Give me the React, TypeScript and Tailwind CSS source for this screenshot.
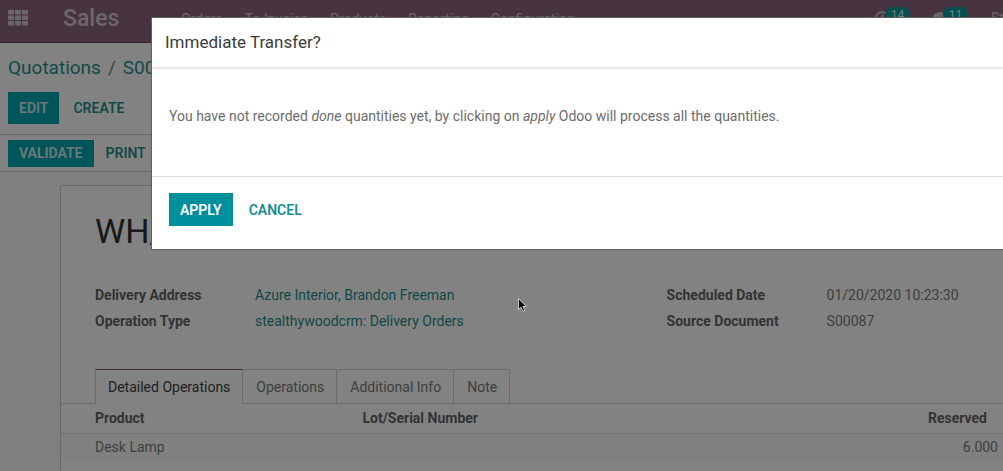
import type { ReactNode } from "react";

const menus = ["Orders", "To Invoice", "Products", "Reporting", "Configuration"];
const tabs = ["Detailed Operations", "Operations", "Additional Info", "Note"];

function AppsIcon() {
  return (
    <svg viewBox="0 0 20 16" className="h-4 w-5" fill="currentColor" aria-hidden="true">
      {[0, 5.5, 11].map((y) =>
        [0, 7, 14].map((x) => <rect key={`${x}-${y}`} x={x} y={y} width="6" height="4.5" rx="0.7" />),
      )}
    </svg>
  );
}

function ClockIcon() {
  return (
    <svg viewBox="0 0 14 14" className="size-3.5" fill="none" stroke="currentColor" strokeWidth="1.8" aria-hidden="true">
      <circle cx="7" cy="7" r="6" />
      <path d="M7.5 3.5V8H4.5" />
    </svg>
  );
}

function ChatIcon() {
  return (
    <svg viewBox="0 0 14 14" className="size-3.5" fill="currentColor" aria-hidden="true">
      <ellipse cx="7" cy="6.5" rx="7" ry="5.5" />
      <path d="M3 10 2 14l5-3z" />
    </svg>
  );
}

function SystrayButton({ icon, count, label }: { icon: ReactNode; count: number; label: string }) {
  return (
    <button type="button" aria-label={label} className="relative flex text-[#d5c8d0]">
      {icon}
      <span className="absolute -top-1 left-2.5 flex h-4 w-[25px] items-center justify-center rounded-full bg-[#00a0a0] text-[12px] leading-none text-[#e8f2f2]">
        {count}
      </span>
    </button>
  );
}

function Field({ label, children }: { label: string; children: ReactNode }) {
  return (
    <>
      <dt className="font-bold text-[#656565]">{label}</dt>
      <dd>{children}</dd>
    </>
  );
}

export default function App() {
  return (
    <div className="relative h-screen overflow-hidden bg-white font-[Roboto,sans-serif] text-[14px] leading-5 text-[#7c7c7c]">
      <header className="flex h-[43px] items-center border-b border-[#5f4556] bg-[#8d667f] pl-2 text-[#d5c8d0]">
        <button type="button" aria-label="Applications" className="-mt-1.5">
          <AppsIcon />
        </button>
        <a href="#sales" className="-mt-1 ml-[35px] w-[118px] text-[23px] leading-8 font-medium">
          Sales
        </a>
        <nav className="-mt-1 flex gap-[22px] whitespace-nowrap">
          {menus.map((menu) => (
            <a key={menu} href="#menu">{menu}</a>
          ))}
        </nav>
        <div className="-mt-1.5 ml-auto flex w-[128px] shrink-0 items-center overflow-hidden py-1">
          <div className="flex w-[58px] shrink-0">
            <SystrayButton icon={<ClockIcon />} count={14} label="Activities" />
          </div>
          <div className="flex w-[58px] shrink-0">
            <SystrayButton icon={<ChatIcon />} count={11} label="Messages" />
          </div>
          <button type="button">Stealthywood</button>
        </div>
      </header>

      <section className="flex h-[92px] flex-col border-b border-[#d0d0d0] px-2 pt-[11px]">
        <nav className="flex gap-[7px] text-[19px] leading-7">
          <a href="#quotations" className="text-[#1f9290]">Quotations</a>
          <span>/</span>
          <a href="#order" className="text-[#1f9290]">S00087</a>
        </nav>
        <div className="mt-2.5 flex h-8 font-semibold">
          <button type="button" className="bg-[#00a8b0] px-[11px] text-[#dceeee]">EDIT</button>
          <button type="button" className="px-3.5 text-[#1f9290]">CREATE</button>
        </div>
      </section>

      <section className="flex h-[37px] items-center border-b border-[#d0d0d0] px-2 font-semibold">
        <button type="button" className="h-[27px] bg-[#00a8b0] px-[11px] text-[#dceeee]">VALIDATE</button>
        <button type="button" className="px-3 text-[#1f9290]">PRINT</button>
      </section>

      <main className="bg-[#fafafa] pt-[13px] pl-[60px]">
        <div className="h-screen rounded-tl-xs border-t border-l border-[#cfcfcf] bg-white pt-[23px]">
          <h1 className="pl-[34px] text-[34px] leading-[44px] text-[#303030]">WH/OUT/00087</h1>
          <dl className="mt-8 grid grid-cols-[160px_7fr_160px_3fr] gap-y-1.5 pl-[34px] whitespace-nowrap">
            <Field label="Delivery Address">
              <a href="#partner" className="text-[#1f8c8c]">Azure Interior, Brandon Freeman</a>
            </Field>
            <Field label="Scheduled Date">01/20/2020 10:23:30</Field>
            <Field label="Operation Type">
              <a href="#type" className="text-[#1f8c8c]">stealthywoodcrm: Delivery Orders</a>
            </Field>
            <Field label="Source Document">S00087</Field>
          </dl>

          <div role="tablist" className="mt-[38px] flex border-b border-[#d4d4d4] pl-[34px]">
            {tabs.map((tab, i) => (
              <button
                key={tab}
                type="button"
                role="tab"
                aria-selected={i === 0}
                className={
                  i === 0
                    ? "-mb-px h-[35px] border border-[#d4d4d4] border-t-[#7c5a70] border-b-white bg-white px-3 text-[#404040]"
                    : "h-[34px] border-t border-r border-[#d4d4d4] pr-3 pl-[13px]"
                }
              >
                {tab}
              </button>
            ))}
          </div>

          <table className="w-full table-fixed border-collapse">
            <thead>
              <tr className="h-[29px] border-b border-[#d8d8d8] text-left text-[#656565]">
                <th className="w-[32%] pl-[34px] font-bold">Product</th>
                <th className="w-[36%] font-bold">Lot/Serial Number</th>
                <th className="pr-4 text-right font-bold">Reserved</th>
              </tr>
            </thead>
            <tbody>
              <tr className="h-7 bg-[#fbfbfb]">
                <td className="pl-[34px]">Desk Lamp</td>
                <td />
                <td className="pr-[5px] text-right">6.000</td>
              </tr>
            </tbody>
          </table>
        </div>
      </main>

      <div className="absolute inset-0 bg-black/49 pt-[18px] pl-[152px]">
        <div role="dialog" aria-labelledby="dialog-title" className="bg-white shadow-[0_0_0_1px_#606060]">
          <h2 id="dialog-title" className="border-b-2 border-[#e8e8e8] px-[13px] pt-3 pb-[13px] text-[17px] leading-6 text-[#3c3c3c]">
            Immediate Transfer?
          </h2>
          <p className="px-[17px] pt-[37px] pb-[50px] text-[#6c6c6c]">
            You have not recorded <em>done</em> quantities yet, by clicking on <em>apply</em> Odoo will process all the
            quantities.
          </p>
          <footer className="flex border-t border-[#dcdcdc] px-[17px] pt-4 pb-[23px] font-semibold">
            <button type="button" className="h-[33px] bg-[#00909b] px-[11px] text-white">APPLY</button>
            <button type="button" className="h-[33px] px-4 text-[#128f95]">CANCEL</button>
          </footer>
        </div>
      </div>

      <svg viewBox="0 0 9 15" className="absolute top-[298px] left-[518px] h-[15px] w-[9px]" aria-hidden="true">
        <path d="M.5.5v11l2.4-2.3 1.9 4.2 2-.9-1.9-4h3.3z" fill="#080808" stroke="#e8e8e8" strokeWidth=".8" />
      </svg>
    </div>
  );
}
